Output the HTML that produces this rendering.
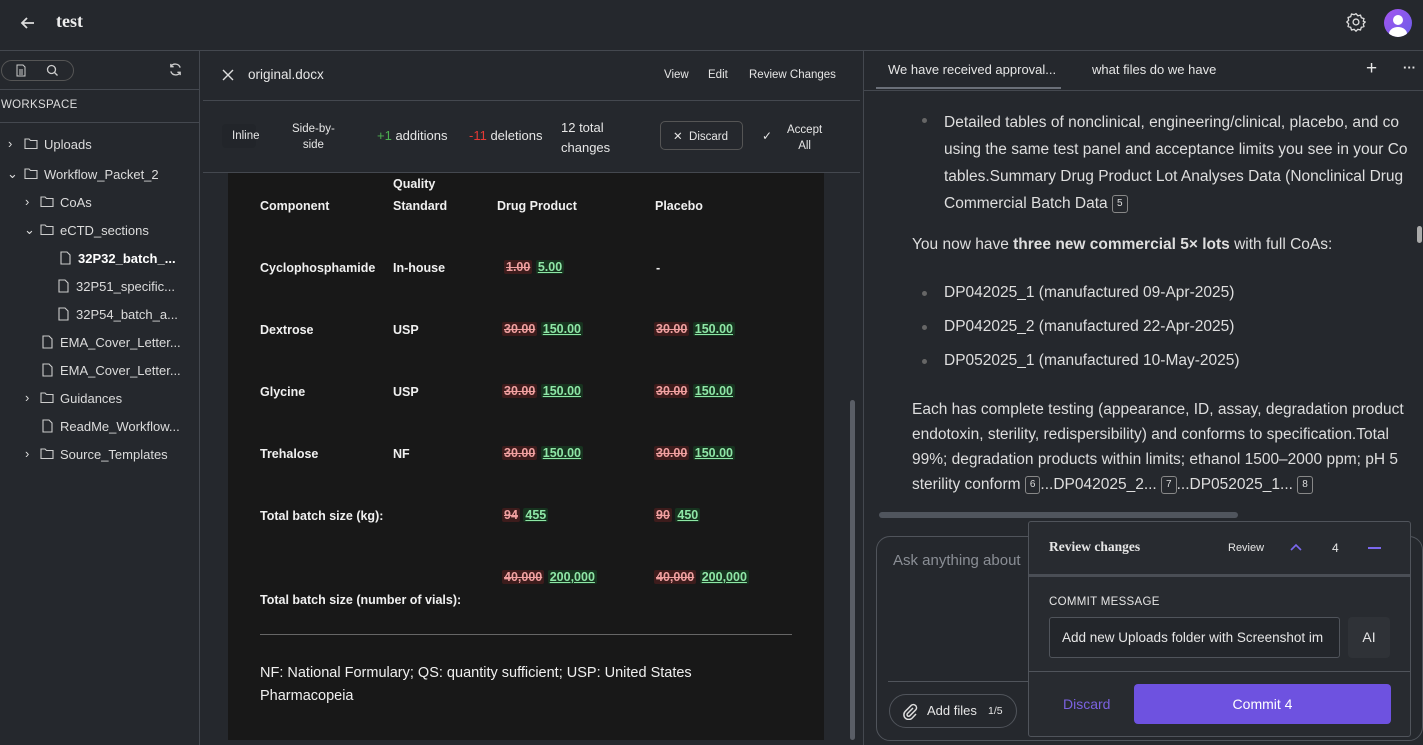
<!DOCTYPE html>
<html><head><meta charset="utf-8"><style>
*{box-sizing:border-box;margin:0;padding:0}
body{width:1423px;height:745px;overflow:hidden;background:#25282d;font-family:"Liberation Sans",sans-serif;color:#e6e6e6;position:relative}
.abs{position:absolute}
.line{position:absolute;background:#44484f}
.tree div{position:absolute;font-size:13px;color:#dcdcdc;white-space:nowrap}
svg{position:absolute}
.doc{position:absolute;left:228px;top:173px;width:596px;height:567px;background:#181818;font-size:12.5px;font-weight:bold;color:#f0f0f0}
.doc div{position:absolute;white-space:nowrap}
.del{background:#3d1c1c;color:#f0a0a0;text-decoration:line-through;padding:0 2px;border-radius:2px}
.add{background:#17331f;color:#8ee6a6;text-decoration:underline;padding:0 2px;border-radius:2px}
.chat{position:absolute;font-size:15.5px;color:#dedede;white-space:nowrap}
.ref{display:inline-block;border:1px solid #888;border-radius:3px;font-size:10px;padding:2px 4px;line-height:12px;vertical-align:2px}
.clip{position:absolute;left:864px;top:91px;width:551px;height:420px;overflow:hidden}
</style></head><body>
<!-- top bar -->
<svg style="left:18px;top:13px" width="20" height="20" viewBox="0 0 20 20"><path d="M16 10H4M9 5l-5 5 5 5" stroke="#ddd" stroke-width="1.8" fill="none"/></svg>
<div class="abs" style="left:56px;top:11px;font-family:'Liberation Serif',serif;font-weight:bold;font-size:18px;color:#eee">test</div>
<svg style="left:1346px;top:12px" width="20" height="20" viewBox="0 0 24 24"><path d="M12 2l2.2 2.5 3.2-.7 1 3.1 3.1 1-.7 3.2L23 12l-2.2 2.2.7 3.2-3.1 1-1 3.1-3.2-.7L12 23l-2.2-2.2-3.2.7-1-3.1-3.1-1 .7-3.2L1 12l2.2-2.2-.7-3.2 3.1-1 1-3.1 3.2.7z" stroke="#ddd" stroke-width="1.6" fill="none"/><circle cx="12" cy="12" r="3.5" stroke="#ddd" stroke-width="1.6" fill="none"/></svg>
<div class="abs" style="left:1384px;top:9px;width:28px;height:28px;border-radius:50%;background:linear-gradient(135deg,#a454f0,#6a5ee8);overflow:hidden"><div class="abs" style="left:9px;top:6px;width:10px;height:10px;border-radius:50%;background:#fff"></div><div class="abs" style="left:5px;top:18px;width:18px;height:14px;border-radius:50%;background:#fff"></div></div>
<div class="line" style="left:0;top:50px;width:1423px;height:1px"></div>
<!-- sidebar -->
<div class="line" style="left:199px;top:50px;width:1px;height:695px"></div>
<div class="abs" style="left:1px;top:60px;width:73px;height:21px;border:1px solid #555;border-radius:11px"></div>
<svg style="left:15px;top:64px" width="12" height="13" viewBox="0 0 12 13"><path d="M2 1h6l2 2v9H2z M4 6h4M4 8h4M4 10h4" stroke="#ccc" fill="none"/></svg>
<svg style="left:46px;top:64px" width="13" height="13" viewBox="0 0 13 13"><circle cx="5.5" cy="5.5" r="4" stroke="#ccc" fill="none" stroke-width="1.3"/><path d="M8.5 8.5l3 3" stroke="#ccc" stroke-width="1.3"/></svg>
<svg style="left:168px;top:62px" width="15" height="15" viewBox="0 0 16 16"><path d="M13 6A5.5 5.5 0 0 0 3 5M3 10a5.5 5.5 0 0 0 10 1M3 2v3h3M13 14v-3h-3" stroke="#ccc" stroke-width="1.4" fill="none"/></svg>
<div class="line" style="left:0;top:89px;width:199px;height:1px"></div>
<div class="abs" style="left:1px;top:99px;font-size:11.5px;letter-spacing:.3px;color:#ddd">WORKSPACE</div>
<div class="line" style="left:0;top:122px;width:199px;height:1px"></div>
<div class="tree">
<div style="left:8px;top:136px">›</div><div style="left:44px;top:137px">Uploads</div>
<div style="left:7px;top:166px">⌄</div><div style="left:44px;top:167px">Workflow_Packet_2</div>
<div style="left:25px;top:194px">›</div><div style="left:60px;top:195px">CoAs</div>
<div style="left:24px;top:222px">⌄</div><div style="left:60px;top:223px">eCTD_sections</div>
<div style="left:78px;top:251px;font-weight:bold;color:#fff">32P32_batch_...</div>
<div style="left:76px;top:279px">32P51_specific...</div>
<div style="left:76px;top:307px">32P54_batch_a...</div>
<div style="left:60px;top:335px">EMA_Cover_Letter...</div>
<div style="left:60px;top:363px">EMA_Cover_Letter...</div>
<div style="left:25px;top:390px">›</div><div style="left:60px;top:391px">Guidances</div>
<div style="left:60px;top:419px">ReadMe_Workflow...</div>
<div style="left:25px;top:446px">›</div><div style="left:60px;top:447px">Source_Templates</div>
</div>
<svg style="left:0;top:0" width="200" height="745">
<g stroke="#ccc" stroke-width="1.1" fill="none">
<path d="M25 139h4l1.5 1.5H37v8H25z"/><path d="M25 169h4l1.5 1.5H37v8H25z"/>
<path d="M41 197h4l1.5 1.5H53v8H41z"/><path d="M41 225h4l1.5 1.5H53v8H41z"/>
<path d="M41 393h4l1.5 1.5H53v8H41z"/><path d="M41 449h4l1.5 1.5H53v8H41z"/>
<path d="M61 252h6l3 3v9h-9z"/><path d="M59 280h6l3 3v9h-9z"/><path d="M59 308h6l3 3v9h-9z"/>
<path d="M43 336h6l3 3v9h-9z"/><path d="M43 364h6l3 3v9h-9z"/><path d="M43 420h6l3 3v9h-9z"/>
</g></svg>
<!-- middle -->
<div class="line" style="left:863px;top:50px;width:1px;height:695px"></div>
<svg style="left:222px;top:69px" width="12" height="12" viewBox="0 0 12 12"><path d="M1 1l10 10M11 1L1 11" stroke="#ddd" stroke-width="1.4"/></svg>
<div class="abs" style="left:248px;top:67px;font-size:13.5px">original.docx</div>
<div class="abs" style="left:664px;top:69px;font-size:11.5px">View</div>
<div class="abs" style="left:708px;top:69px;font-size:11.5px">Edit</div>
<div class="abs" style="left:749px;top:69px;font-size:11.5px">Review Changes</div>
<div class="line" style="left:203px;top:100px;width:657px;height:1px"></div>
<div class="abs" style="left:222px;top:124px;width:34px;height:24px;background:#22252a;border-radius:4px"></div>
<div class="abs" style="left:232px;top:130px;font-size:11.5px">Inline</div>
<div class="abs" style="left:292px;top:121px;font-size:11.5px;text-align:center;line-height:16px">Side-by-<br>side</div>
<div class="abs" style="left:377px;top:128px;font-size:13px"><span style="color:#4caf50">+1</span> additions</div>
<div class="abs" style="left:469px;top:128px;font-size:13px"><span style="color:#e53935">-11</span> deletions</div>
<div class="abs" style="left:561px;top:118px;font-size:13px;line-height:20px">12 total<br>changes</div>
<div class="abs" style="left:660px;top:121px;width:83px;height:29px;border:1px solid #555;border-radius:5px"></div>
<div class="abs" style="left:673px;top:129px;font-size:11.5px">✕&nbsp; Discard</div>
<div class="abs" style="left:762px;top:129px;font-size:12px">✓</div>
<div class="abs" style="left:787px;top:122px;font-size:11.5px;text-align:center;line-height:16px">Accept<br>All</div>
<div class="line" style="left:203px;top:172px;width:657px;height:1px"></div>
<div class="doc">
<div style="left:165px;top:4px">Quality</div>
<div style="left:32px;top:26px">Component</div><div style="left:165px;top:26px">Standard</div><div style="left:269px;top:26px">Drug Product</div><div style="left:427px;top:26px">Placebo</div>
<div style="left:32px;top:88px">Cyclophosphamide</div><div style="left:165px;top:88px">In-house</div><div style="left:276px;top:87px"><span class="del">1.00</span> <span class="add">5.00</span></div><div style="left:428px;top:88px">-</div>
<div style="left:32px;top:150px">Dextrose</div><div style="left:165px;top:150px">USP</div><div style="left:274px;top:149px"><span class="del">30.00</span> <span class="add">150.00</span></div><div style="left:426px;top:149px"><span class="del">30.00</span> <span class="add">150.00</span></div>
<div style="left:32px;top:212px">Glycine</div><div style="left:165px;top:212px">USP</div><div style="left:274px;top:211px"><span class="del">30.00</span> <span class="add">150.00</span></div><div style="left:426px;top:211px"><span class="del">30.00</span> <span class="add">150.00</span></div>
<div style="left:32px;top:274px">Trehalose</div><div style="left:165px;top:274px">NF</div><div style="left:274px;top:273px"><span class="del">30.00</span> <span class="add">150.00</span></div><div style="left:426px;top:273px"><span class="del">30.00</span> <span class="add">150.00</span></div>
<div style="left:32px;top:336px">Total batch size (kg):</div><div style="left:274px;top:335px"><span class="del">94</span> <span class="add">455</span></div><div style="left:426px;top:335px"><span class="del">90</span> <span class="add">450</span></div>
<div style="left:274px;top:397px"><span class="del">40,000</span> <span class="add">200,000</span></div><div style="left:426px;top:397px"><span class="del">40,000</span> <span class="add">200,000</span></div>
<div style="left:32px;top:420px">Total batch size (number of vials):</div>
<div style="left:32px;top:461px;width:532px;height:1px;background:#666"></div>
<div style="left:32px;top:489px;font-weight:normal;font-size:14.5px;line-height:23px">NF: National Formulary; QS: quantity sufficient; USP: United States<br>Pharmacopeia</div>
</div>
<div class="abs" style="left:850px;top:400px;width:5px;height:340px;background:#5a5e66;border-radius:3px"></div>
<!-- right -->
<div class="abs" style="left:888px;top:62px;font-size:13px">We have received approval...</div>
<div class="abs" style="left:876px;top:87px;width:185px;height:2px;background:#6a6f78"></div>
<div class="abs" style="left:1092px;top:62px;font-size:13px">what files do we have</div>
<div class="abs" style="left:1366px;top:58px;font-size:19px">+</div>
<div class="abs" style="left:1403px;top:60px;font-size:13px;font-weight:bold">···</div>
<div class="line" style="left:864px;top:90px;width:559px;height:1px"></div>
<div class="abs" style="left:1417px;top:226px;width:5px;height:17px;background:#aaa;border-radius:3px"></div>
<div class="clip">
<div class="abs" style="left:58px;top:27px;width:5px;height:5px;border-radius:50%;background:#666"></div>
<div class="chat" style="left:80px;top:18px;line-height:27px">Detailed tables of nonclinical, engineering/clinical, placebo, and co<br>using the same test panel and acceptance limits you see in your Co<br>tables.Summary Drug Product Lot Analyses Data (Nonclinical Drug<br>Commercial Batch Data <span class="ref">5</span></div>
<div class="chat" style="left:48px;top:145px">You now have <b>three new commercial 5× lots</b> with full CoAs:</div>
<div class="abs" style="left:58px;top:200px;width:5px;height:5px;border-radius:50%;background:#666"></div>
<div class="abs" style="left:58px;top:234px;width:5px;height:5px;border-radius:50%;background:#666"></div>
<div class="abs" style="left:58px;top:268px;width:5px;height:5px;border-radius:50%;background:#666"></div>
<div class="chat" style="left:80px;top:193px">DP042025_1 (manufactured 09-Apr-2025)</div>
<div class="chat" style="left:80px;top:227px">DP042025_2 (manufactured 22-Apr-2025)</div>
<div class="chat" style="left:80px;top:261px">DP052025_1 (manufactured 10-May-2025)</div>
<div class="chat" style="left:48px;top:306px;line-height:25px">Each has complete testing (appearance, ID, assay, degradation product<br>endotoxin, sterility, redispersibility) and conforms to specification.Total<br>99%; degradation products within limits; ethanol 1500–2000 ppm; pH 5<br>sterility conform <span class="ref">6</span>...DP042025_2... <span class="ref">7</span>...DP052025_1... <span class="ref">8</span></div>
</div>
<div class="abs" style="left:879px;top:512px;width:359px;height:6px;background:#50555d;border-radius:3px"></div>
<div class="abs" style="left:876px;top:536px;width:547px;height:205px;border:1px solid #50545b;border-radius:14px"></div>
<div class="abs" style="left:893px;top:552px;font-size:15px;color:#8a8e95">Ask anything about</div>
<div class="abs" style="left:888px;top:681px;width:140px;height:1px;background:#50545b"></div>
<div class="abs" style="left:889px;top:694px;width:128px;height:34px;border:1px solid #50545b;border-radius:17px"></div>
<svg style="left:902px;top:702px" width="16" height="18" viewBox="0 0 16 18"><path d="M11 6l-5.5 5.5a1.6 1.6 0 0 0 2.3 2.3l6-6a3.2 3.2 0 0 0-4.5-4.5l-6 6a4.8 4.8 0 0 0 6.8 6.8L14 12" stroke="#ddd" stroke-width="1.5" fill="none"/></svg>
<div class="abs" style="left:927px;top:703px;font-size:13px">Add files</div>
<div class="abs" style="left:988px;top:705px;font-size:10.5px">1/5</div>
<!-- review popup -->
<div class="abs" style="left:1028px;top:521px;width:383px;height:216px;background:#282b30;border:1px solid #50545b;border-radius:3px"></div>
<div class="abs" style="left:1049px;top:539px;font-family:'Liberation Serif',serif;font-weight:bold;font-size:13.5px">Review changes</div>
<div class="abs" style="left:1228px;top:542px;font-size:11px">Review</div>
<svg style="left:1290px;top:543px" width="12" height="8" viewBox="0 0 12 8"><path d="M1 7l5-5 5 5" stroke="#7b68ee" stroke-width="1.6" fill="none"/></svg>
<div class="abs" style="left:1332px;top:541px;font-size:12px">4</div>
<div class="abs" style="left:1368px;top:547px;width:13px;height:2px;background:#7b68ee"></div>
<div class="abs" style="left:1029px;top:574px;width:381px;height:3px;background:#4a4e55"></div>
<div class="abs" style="left:1049px;top:596px;font-size:11.5px;letter-spacing:.3px">COMMIT MESSAGE</div>
<div class="abs" style="left:1049px;top:617px;width:291px;height:41px;background:#23262b;border:1px solid #50545b;border-radius:3px;overflow:hidden;padding:12px 12px;font-size:13.5px;white-space:nowrap">Add new Uploads folder with Screenshot im</div>
<div class="abs" style="left:1348px;top:617px;width:42px;height:41px;background:#2f3237;border-radius:4px;text-align:center;line-height:41px;font-size:14px">AI</div>
<div class="abs" style="left:1029px;top:671px;width:381px;height:1px;background:#50545b"></div>
<div class="abs" style="left:1063px;top:696px;font-size:14px;color:#7b62e0">Discard</div>
<div class="abs" style="left:1134px;top:684px;width:257px;height:40px;background:#6e52e0;border-radius:4px;text-align:center;line-height:40px;font-size:14px;color:#fff">Commit 4</div>
</body></html>
